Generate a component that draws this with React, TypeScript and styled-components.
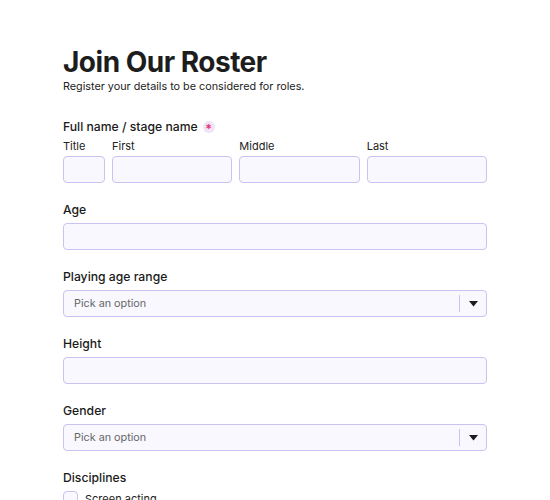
import styled, { createGlobalStyle } from 'styled-components';

const GlobalStyle = createGlobalStyle`
  html, body {
    margin: 0;
    padding: 0;
    background: #ffffff;
    font-family: Inter, "Noto Sans", sans-serif;
    color: #1c1c1c;
  }
`;

const Page = styled.div`
  padding: 45px 63px 0 63px;
  width: 424px;
`;

const Title = styled.h1`
  margin: 0;
  font-size: 28px;
  line-height: 34px;
  font-weight: 700;
  letter-spacing: -0.5px;
  color: #1d1d1d;
`;

const Subtitle = styled.p`
  margin: 0;
  font-size: 10.8px;
  line-height: 16px;
  color: #222;
`;

const Form = styled.div`
  margin-top: 23px;
  display: flex;
  flex-direction: column;
  gap: 18px;
`;

const Field = styled.div`
  display: flex;
  flex-direction: column;
`;

const Label = styled.div<{ $tight?: boolean }>`
  font-size: 12.2px;
  line-height: 18px;
  font-weight: 500;
  color: #1a1a1a;
  margin-bottom: ${(p) => (p.$tight ? '3px' : '4px')};
  display: flex;
  align-items: center;
  gap: 5px;
`;

const Required = styled.span`
  display: inline-flex;
  align-items: center;
  justify-content: center;
  width: 12px;
  height: 12px;
  border-radius: 50%;
  background: #efe4f7;
  color: #e0356f;
  font-size: 12px;
  line-height: 1;
  font-weight: 700;
  padding-top: 3px;
  box-sizing: border-box;
`;

const NameRow = styled.div`
  display: grid;
  grid-template-columns: 42px 1fr 1fr 1fr;
  gap: 7px;
`;

const SubField = styled.div`
  display: flex;
  flex-direction: column;
`;

const SubLabel = styled.div`
  font-size: 11px;
  line-height: 14px;
  color: #222;
  margin-bottom: 3px;
`;

const Input = styled.div`
  box-sizing: border-box;
  height: 27px;
  border: 1px solid #cbc2f2;
  border-radius: 4px;
  background: #f9f8ff;
`;

const Select = styled(Input)`
  display: flex;
  align-items: center;
  padding-left: 10px;
`;

const Placeholder = styled.span`
  flex: 1;
  font-size: 10.8px;
  color: #666;
`;

const Divider = styled.span`
  width: 1px;
  height: 17px;
  background: #cbc2f2;
`;

const Arrow = styled.span`
  width: 26px;
  display: flex;
  justify-content: center;
  align-items: center;
`;

const CheckRow = styled.div`
  display: flex;
  align-items: center;
  gap: 7px;
  font-size: 11px;
  color: #222;
`;

const Box = styled.span`
  box-sizing: border-box;
  width: 15px;
  height: 15px;
  border: 1px solid #cbc2f2;
  border-radius: 4px;
  background: #f9f8ff;
`;

const Caret = () => (
  <svg width="9" height="6" viewBox="0 0 9 6">
    <path d="M0 0 L9 0 L4.5 5.5 Z" fill="#1c1c1c" />
  </svg>
);

const SelectBox = () => (
  <Select>
    <Placeholder>Pick an option</Placeholder>
    <Divider />
    <Arrow>
      <Caret />
    </Arrow>
  </Select>
);

export default function App() {
  return (
    <>
      <GlobalStyle />
      <Page>
        <Title>Join Our Roster</Title>
        <Subtitle>Register your details to be considered for roles.</Subtitle>
        <Form>
          <Field>
            <Label $tight>
              Full name / stage name <Required>*</Required>
            </Label>
            <NameRow>
              {['Title', 'First', 'Middle', 'Last'].map((n) => (
                <SubField key={n}>
                  <SubLabel>{n}</SubLabel>
                  <Input />
                </SubField>
              ))}
            </NameRow>
          </Field>
          <Field>
            <Label>Age</Label>
            <Input />
          </Field>
          <Field>
            <Label>Playing age range</Label>
            <SelectBox />
          </Field>
          <Field>
            <Label>Height</Label>
            <Input />
          </Field>
          <Field>
            <Label>Gender</Label>
            <SelectBox />
          </Field>
          <Field>
            <Label>Disciplines</Label>
            <CheckRow>
              <Box />
              Screen acting
            </CheckRow>
          </Field>
        </Form>
      </Page>
    </>
  );
}
